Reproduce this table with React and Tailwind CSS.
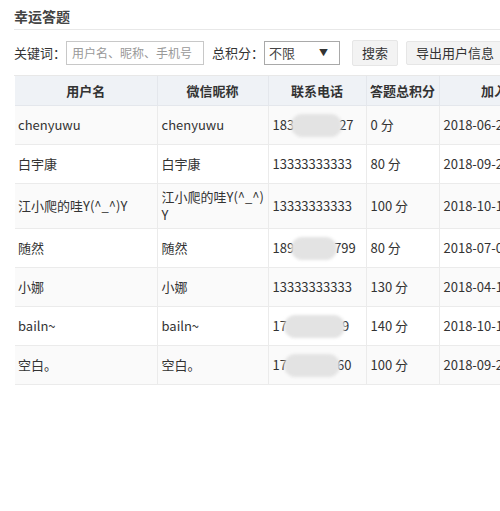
import React from "react";

const rows = [
  { name: "chenyuwu", nick: "chenyuwu", phone: ["183", 45, "27"], score: "0 分", date: "2018-06-26 10:22:13" },
  { name: "白宇康", nick: "白宇康", phone: "13333333333", score: "80 分", date: "2018-09-21 16:05:41" },
  { name: "江小爬的哇Y(^_^)Y", nick: "江小爬的哇Y(^_^)Y", phone: "13333333333", score: "100 分", date: "2018-10-12 09:31:07", tall: true },
  { name: "随然", nick: "随然", phone: ["189", 40, "799"], score: "80 分", date: "2018-07-03 14:48:22" },
  { name: "小娜", nick: "小娜", phone: "13333333333", score: "130 分", date: "2018-04-17 11:12:55" },
  { name: "bailn~", nick: "bailn~", phone: ["17", 55, "9"], score: "140 分", date: "2018-10-15 20:40:36" },
  { name: "空白。", nick: "空白。", phone: ["17", 50, "60"], score: "100 分", date: "2018-09-25 08:16:09" },
];

const Phone = ({ value }) => {
  if (typeof value === "string") return <span>{value}</span>;
  const [head, hidden, tail] = value;
  return (
    <span className="inline-flex items-center">
      <span>{head}</span>
      <span className="relative inline-block h-[14px]" style={{ width: hidden }}>
        <span className="absolute -left-[3px] -right-[3px] top-[-4px] bottom-[-5px] rounded-full bg-[#e3e3e3] blur-[1.5px]" />
      </span>
      <span>{tail}</span>
    </span>
  );
};

const Th = ({ children }) => (
  <th className="h-[29px] border-r border-[#e4e7ec] font-bold text-[#333] text-center whitespace-nowrap">{children}</th>
);

export default function App() {
  return (
    <div
      className="w-[500px] h-[511px] overflow-hidden bg-white text-[13px] text-[#333]"
      style={{ fontFamily: '"Noto Sans CJK SC", "Noto Sans", sans-serif' }}
    >
      <div className="pl-[14px] pt-[3px]">
        <div className="h-[27px] flex items-center text-[14px] font-bold text-[#444] border-b border-[#e8e8e8]">
          幸运答题
        </div>
        <div className="flex items-center h-[46px] border-b border-[#e8e8e8] whitespace-nowrap">
          <span className="shrink-0">关键词：</span>
          <input
            placeholder="用户名、昵称、手机号"
            className="shrink-0 w-[138px] h-[24px] border border-[#c8c8c8] px-[5px] text-[12px] placeholder:text-[#999] outline-none"
          />
          <span className="shrink-0 ml-[8px]">总积分：</span>
          <div className="shrink-0 w-[76px] h-[24px] border border-[#a9a9a9] flex items-center justify-between px-[4px] text-[#444]">
            <span>不限</span>
            <span className="text-[9px] text-[#333] mr-[7px]">▼</span>
          </div>
          <button className="shrink-0 ml-[12px] h-[26px] w-[46px] rounded-[2px] border border-[#e6e6e6] bg-[#f3f3f3]">搜索</button>
          <button className="shrink-0 ml-[8px] h-[24px] px-[9px] rounded-[2px] border border-[#e6e6e6] bg-[#f3f3f3]">导出用户信息</button>
        </div>
      </div>
      <table className="ml-[15px] border-collapse table-fixed w-[560px]">
        <colgroup>
          <col className="w-[142px]" />
          <col className="w-[111px]" />
          <col className="w-[98px]" />
          <col className="w-[73px]" />
          <col className="w-[136px]" />
        </colgroup>
        <thead>
          <tr className="bg-[#eff2f6] border-b border-[#e4e7ec]">
            <Th>用户名</Th>
            <Th>微信昵称</Th>
            <Th>联系电话</Th>
            <Th>答题总积分</Th>
            <Th>加入时间</Th>
          </tr>
        </thead>
        <tbody>
          {rows.map((r, i) => (
            <tr key={i} className={`border-b border-[#ebebeb] ${i % 2 === 0 ? "bg-[#fafafa]" : "bg-white"}`}>
              <td className={`${r.tall ? "h-[45px]" : "h-[39px]"} px-[3px] border-r border-[#ebebeb] leading-[18px]`}>{r.name}</td>
              <td className="pl-[4px] pr-[1px] border-r border-[#ebebeb] leading-[18px] break-all">{r.nick}</td>
              <td className="px-[4px] border-r border-[#ebebeb]"><Phone value={r.phone} /></td>
              <td className="px-[4px] border-r border-[#ebebeb]">{r.score}</td>
              <td className="px-[4px] whitespace-nowrap overflow-hidden">{r.date}</td>
            </tr>
          ))}
        </tbody>
      </table>
    </div>
  );
}
